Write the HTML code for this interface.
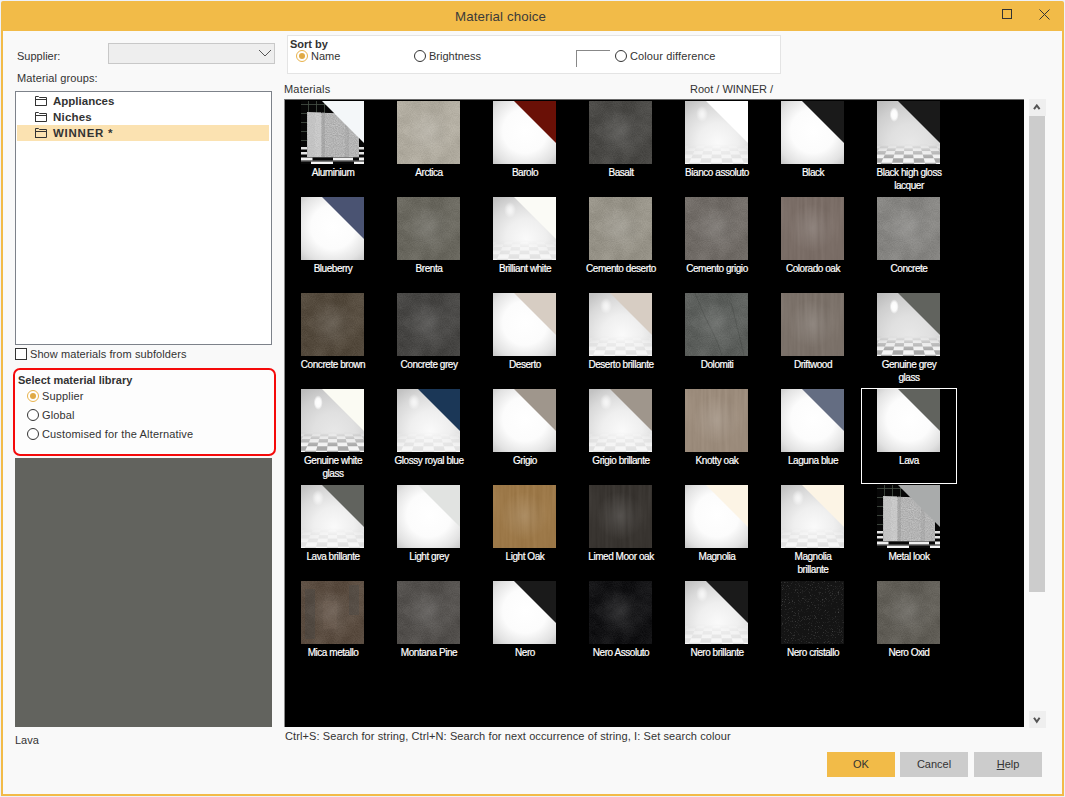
<!DOCTYPE html>
<html><head><meta charset="utf-8">
<style>
*{margin:0;padding:0;box-sizing:border-box}
html,body{width:1065px;height:797px;overflow:hidden;background:#eef1f9;font-family:"Liberation Sans",sans-serif;color:#333}
.win{position:absolute;left:1px;top:1px;width:1063px;height:795px;background:#f2bb48;border-radius:2px 2px 0 0}
.cont{position:absolute;left:2px;top:30px;width:1059px;height:763px;background:#f9f9f9}
.t{position:absolute;white-space:nowrap;line-height:1;font-size:11px}
.b{font-weight:bold}
.title{position:absolute;left:454px;top:9px;font-size:13.3px;line-height:1;color:#3a3a3a;letter-spacing:.1px}
.ctl{position:absolute}
.combo{left:108px;top:43px;width:167px;height:21px;background:#eeeeee;border:1px solid #c8c8c8}
.tree{left:15px;top:91px;width:257px;height:254px;background:#fff;border:1px solid #7d828a}
.hl{position:absolute;left:17px;top:125px;width:252px;height:16px;background:#fbe2b1}
.folder{position:absolute;width:12px;height:11px}
.chk{left:15px;top:348px;width:12px;height:12px;border:1px solid #333;background:#fff}
.redbox{left:13px;top:368px;width:263px;height:88px;border:2px solid #f50a0a;border-radius:7px;background:#fdfdfd}
.radio{position:absolute;width:12px;height:12px;border:1px solid #333;border-radius:50%;background:#fff}
.radio.on{border-color:#e8b24a}
.radio.on::after{content:"";position:absolute;left:2px;top:2px;width:6px;height:6px;border-radius:50%;background:#e0aa45}
.preview{left:15px;top:458px;width:257px;height:269px;background:#62635e}
.sortbox{left:287px;top:35px;width:494px;height:39px;border:1px solid #e4e4e4;background:#fff}
.colbox{left:576px;top:50px;width:34px;height:17px;border-top:1px solid #888;border-left:1px solid #888}
.grid{position:absolute;left:284px;top:99px;width:740px;height:628px;background:#000;border-top:1px solid #6a6a6a;border-left:1px solid #8a8a8a;overflow:hidden}
.cell{position:absolute;width:96px;height:96px}
.cell.sel{border:1px solid #fff}
.th{position:absolute;left:16px;top:1px;display:block}
.sel .th{left:15px;top:0}
.lb{position:absolute;left:0;top:66px;width:96px;text-align:center;color:#fff;-webkit-text-stroke:.2px #fff;font-size:10px;line-height:13px;letter-spacing:-.45px}
.sel .lb{left:-1px;top:65px}
.sb{position:absolute;left:1029px;width:17px;background:#efefef}
.thumb{position:absolute;left:1029px;top:116px;width:16px;height:476px;background:#cccccc}
.btn{position:absolute;top:752px;width:68px;height:25px;background:#cccccc;font-size:11px;line-height:25px;text-align:center;color:#333}
.btn.ok{background:#f2bb48}
</style></head><body>
<svg width="0" height="0" style="position:absolute">
<defs>
  <radialGradient id="glossg" gradientUnits="userSpaceOnUse" cx="32" cy="30" r="49">
    <stop offset="0" stop-color="#ffffff"/>
    <stop offset="0.45" stop-color="#fcfcfc"/>
    <stop offset="0.75" stop-color="#e2e2e2"/>
    <stop offset="1" stop-color="#bdbdbd"/>
  </radialGradient>
  <radialGradient id="chkbg" gradientUnits="userSpaceOnUse" cx="33" cy="42" r="50">
    <stop offset="0" stop-color="#fafafa"/>
    <stop offset="0.4" stop-color="#efefef"/>
    <stop offset="0.75" stop-color="#d9d9d9"/>
    <stop offset="1" stop-color="#c2c2c2"/>
  </radialGradient>
  <radialGradient id="chkbg2" gradientUnits="userSpaceOnUse" cx="33" cy="44" r="52">
    <stop offset="0" stop-color="#e8e8e8"/>
    <stop offset="0.4" stop-color="#e0e0e0"/>
    <stop offset="0.75" stop-color="#cfcfcf"/>
    <stop offset="1" stop-color="#bcbcbc"/>
  </radialGradient>
  <linearGradient id="fog" gradientUnits="userSpaceOnUse" x1="0" y1="44" x2="0" y2="60">
    <stop offset="0" stop-color="#f2f2f2" stop-opacity="1"/>
    <stop offset="1" stop-color="#f2f2f2" stop-opacity="0"/>
  </linearGradient>
  <radialGradient id="spotg">
    <stop offset="0" stop-color="#fff" stop-opacity="1"/>
    <stop offset="0.4" stop-color="#fff" stop-opacity=".75"/>
    <stop offset="1" stop-color="#fff" stop-opacity="0"/>
  </radialGradient>
  <radialGradient id="texhl" gradientUnits="userSpaceOnUse" cx="31" cy="31" r="24">
    <stop offset="0" stop-color="#fff" stop-opacity=".13"/>
    <stop offset="1" stop-color="#fff" stop-opacity="0"/>
  </radialGradient>
  <filter id="fc" x="0" y="0" width="100%" height="100%" color-interpolation-filters="sRGB">
    <feTurbulence type="fractalNoise" baseFrequency="0.06" numOctaves="3" seed="4" result="n"/>
    <feColorMatrix in="n" type="matrix" values="1 0 0 0 0 1 0 0 0 0 1 0 0 0 0 0 0 0 0 1" result="g"/>
    <feComposite in="SourceGraphic" in2="g" operator="arithmetic" k1="0" k2="1" k3="0.10" k4="-0.05" result="a"/>
    <feTurbulence type="fractalNoise" baseFrequency="0.9" numOctaves="1" seed="7" result="n2"/>
    <feColorMatrix in="n2" type="matrix" values="1 0 0 0 0 1 0 0 0 0 1 0 0 0 0 0 0 0 0 1" result="g2"/>
    <feComposite in="a" in2="g2" operator="arithmetic" k1="0" k2="1" k3="0.10" k4="-0.05"/>
  </filter>
  <filter id="fs" x="0" y="0" width="100%" height="100%" color-interpolation-filters="sRGB">
    <feTurbulence type="fractalNoise" baseFrequency="0.3 0.02" numOctaves="2" seed="5" result="n"/>
    <feColorMatrix in="n" type="matrix" values="1 0 0 0 0 1 0 0 0 0 1 0 0 0 0 0 0 0 0 1" result="g"/>
    <feComposite in="SourceGraphic" in2="g" operator="arithmetic" k1="0" k2="1" k3="0.07" k4="-0.035"/>
  </filter>
  <filter id="fg" x="0" y="0" width="100%" height="100%" color-interpolation-filters="sRGB">
    <feTurbulence type="fractalNoise" baseFrequency="1.1" numOctaves="1" seed="11" result="n"/>
    <feColorMatrix in="n" type="matrix" values="1 0 0 0 0 1 0 0 0 0 1 0 0 0 0 0 0 0 0 1" result="g"/>
    <feComposite in="SourceGraphic" in2="g" operator="arithmetic" k1="0" k2="1" k3="0.22" k4="-0.11" result="c"/>
    <feComposite in="c" in2="SourceGraphic" operator="in"/>
  </filter>
  <filter id="fk" x="0" y="0" width="100%" height="100%" color-interpolation-filters="sRGB">
    <feTurbulence type="fractalNoise" baseFrequency="1.3" numOctaves="1" seed="9" result="n"/>
    <feColorMatrix in="n" type="matrix" values="0 0 0 0 0.4 0 0 0 0 0.4 0 0 0 0 0.4 2.5 0 0 0 -1.45" result="g"/>
    <feComposite in="g" in2="SourceGraphic" operator="over"/>
  </filter>
  <path id="chkp" d="M-9.9,66.9 L1.9,66.9 L4.2,61.7 L-6.7,61.7ZM13.8,66.9 L25.6,66.9 L26.0,61.7 L15.1,61.7ZM37.4,66.9 L49.2,66.9 L47.9,61.7 L37.0,61.7ZM61.1,66.9 L72.9,66.9 L69.7,61.7 L58.8,61.7ZM4.2,61.7 L15.1,61.7 L16.3,57.3 L6.2,57.3ZM26.0,61.7 L37.0,61.7 L36.6,57.3 L26.4,57.3ZM47.9,61.7 L58.8,61.7 L56.8,57.3 L46.7,57.3ZM-4.0,57.3 L6.2,57.3 L7.9,53.5 L-1.6,53.5ZM16.3,57.3 L26.4,57.3 L26.8,53.5 L17.3,53.5ZM36.6,57.3 L46.7,57.3 L45.7,53.5 L36.2,53.5ZM56.8,57.3 L67.0,57.3 L64.6,53.5 L55.1,53.5ZM-11.1,53.5 L-1.6,53.5 L0.5,50.1 L-8.4,50.1ZM7.9,53.5 L17.3,53.5 L18.2,50.1 L9.3,50.1ZM26.8,53.5 L36.2,53.5 L35.9,50.1 L27.1,50.1ZM45.7,53.5 L55.1,53.5 L53.7,50.1 L44.8,50.1ZM64.6,53.5 L74.1,53.5 L71.4,50.1 L62.5,50.1ZM0.5,50.1 L9.3,50.1 L10.6,47.2 L2.3,47.2ZM18.2,50.1 L27.1,50.1 L27.3,47.2 L19.0,47.2ZM35.9,50.1 L44.8,50.1 L44.0,47.2 L35.7,47.2ZM53.7,50.1 L62.5,50.1 L60.7,47.2 L52.4,47.2ZM-6.0,47.2 L2.3,47.2 L3.9,44.5 L-4.0,44.5ZM10.6,47.2 L19.0,47.2 L19.7,44.5 L11.8,44.5ZM27.3,47.2 L35.7,47.2 L35.4,44.5 L27.6,44.5ZM44.0,47.2 L52.4,47.2 L51.2,44.5 L43.3,44.5ZM60.7,47.2 L69.0,47.2 L67.0,44.5 L59.1,44.5ZM3.9,44.5 L11.8,44.5 L12.8,42.2 L5.4,42.2ZM19.7,44.5 L27.6,44.5 L27.8,42.2 L20.3,42.2ZM35.4,44.5 L43.3,44.5 L42.7,42.2 L35.2,42.2ZM51.2,44.5 L59.1,44.5 L57.6,42.2 L50.2,42.2Z"/>
  <linearGradient id="fog2" gradientUnits="userSpaceOnUse" x1="0" y1="44" x2="0" y2="58">
    <stop offset="0" stop-color="#e2e2e2" stop-opacity="1"/>
    <stop offset="1" stop-color="#e2e2e2" stop-opacity="0"/>
  </linearGradient>
  <radialGradient id="spotg2">
    <stop offset="0" stop-color="#fff" stop-opacity="1"/>
    <stop offset="0.6" stop-color="#fff" stop-opacity=".9"/>
    <stop offset="1" stop-color="#fff" stop-opacity="0"/>
  </radialGradient>
  <linearGradient id="fmg" gradientUnits="userSpaceOnUse" x1="0" y1="43" x2="0" y2="60">
    <stop offset="0" stop-color="#000"/>
    <stop offset="1" stop-color="#fff"/>
  </linearGradient>
  <mask id="fm" maskUnits="userSpaceOnUse" x="0" y="0" width="63" height="63"><rect x="0" y="42" width="63" height="21" fill="url(#fmg)"/></mask>
  <linearGradient id="fmg2" gradientUnits="userSpaceOnUse" x1="0" y1="43" x2="0" y2="57">
    <stop offset="0" stop-color="#000"/>
    <stop offset="1" stop-color="#fff"/>
  </linearGradient>
  <mask id="fm2" maskUnits="userSpaceOnUse" x="0" y="0" width="63" height="63"><rect x="0" y="42" width="63" height="21" fill="url(#fmg2)"/></mask>
  <g id="spot"><ellipse cx="17" cy="13" rx="6" ry="8" fill="url(#spotg)" opacity=".75"/></g>
  <g id="spot2"><ellipse cx="17.2" cy="13.6" rx="4.6" ry="7.4" fill="url(#spotg2)"/></g>
  <g id="floorf" mask="url(#fm)">
    <rect x="0" y="42" width="63" height="21" fill="#e2e2e2"/>
    <use href="#chkp" fill="#f6f6f6"/>
  </g>
  <g id="floors" mask="url(#fm2)">
    <rect x="0" y="42" width="63" height="21" fill="#a8a8a8"/>
    <use href="#chkp" fill="#f4f4f4"/>
  </g>
  <g id="metal">
    <rect width="63" height="63" fill="#060606"/>
    <path d="M7.5,0v47M15.5,0v47M23.5,0v12M0,3.5h63M0,12.5h8M0,21.5h8M0,30.5h8M0,39.5h8" stroke="#475247" stroke-width=".8"/>
    <rect x="0" y="46" width="63" height="2.5" fill="#e2e2e2"/>
    <rect x="0" y="51" width="63" height="2.5" fill="#e6e6e6"/>
    <rect x="0" y="56.5" width="63" height="3" fill="#f0f0f0"/>
    <path d="M11.5,56.5h20.5v3h-20.5zM52,56.5h6v3h-6z" fill="#080808"/>
    <rect x="0" y="60.5" width="63" height="2.5" fill="#f4f4f4"/>
    <path d="M0,60.5h10v2.5h-10zM32,60.5h21v2.5h-21z" fill="#080808"/>
    <path d="M6,11L58,13V56H6Z" fill="#b4b4b4" filter="url(#fg)"/>
    <rect x="7" y="11" width="7" height="45" fill="#d0d0d0" opacity=".55"/>
    <rect x="14" y="11" width="6" height="45" fill="#e0e0e0" opacity=".45"/>
    <rect x="21" y="11" width="3" height="45" fill="#909090" opacity=".35"/>
    <rect x="44" y="12" width="4" height="44" fill="#909090" opacity=".25"/>
  </g>
</defs>
</svg>

<div class="win">
  <div class="title">Material choice</div>
  <svg style="position:absolute;left:999px;top:6px" width="14" height="14" viewBox="0 0 14 14"><rect x="2.5" y="2.5" width="9" height="9" fill="none" stroke="#333" stroke-width="1"/></svg>
  <svg style="position:absolute;left:1038px;top:8px" width="12" height="12" viewBox="0 0 12 12"><path d="M0.5,0.5L10.5,10.5M10.5,0.5L0.5,10.5" stroke="#333" stroke-width="1"/></svg>
  <div class="cont"></div>
</div>

<!-- left panel -->
<div class="t" style="left:17px;top:51px">Supplier:</div>
<div class="ctl combo"><svg style="position:absolute;left:149px;top:5px" width="14" height="8" viewBox="0 0 14 8"><path d="M1,1L7,7L13,1" fill="none" stroke="#555" stroke-width="1"/></svg></div>
<div class="t" style="left:17px;top:73px;letter-spacing:.12px">Material groups:</div>
<div class="ctl tree"></div>
<div class="hl"></div>
<svg class="folder" style="left:35px;top:96px" viewBox="0 0 12 11"><path d="M0.5,10V0.5H3.5L4.5,1.5H11.5V9.5H0.5M0.5,3.5H11.5" fill="none" stroke="#333" stroke-width="1"/></svg>
<svg class="folder" style="left:35px;top:112px" viewBox="0 0 12 11"><path d="M0.5,10V0.5H3.5L4.5,1.5H11.5V9.5H0.5M0.5,3.5H11.5" fill="none" stroke="#333" stroke-width="1"/></svg>
<svg class="folder" style="left:35px;top:128px" viewBox="0 0 12 11"><path d="M0.5,10V0.5H3.5L4.5,1.5H11.5V9.5H0.5M0.5,3.5H11.5" fill="none" stroke="#333" stroke-width="1"/></svg>
<div class="t b" style="left:53px;top:96px;font-size:11.5px">Appliances</div>
<div class="t b" style="left:53px;top:112px;font-size:11.5px;letter-spacing:.2px">Niches</div>
<div class="t b" style="left:53px;top:128px;font-size:11.5px;letter-spacing:.75px">WINNER *</div>

<div class="ctl chk"></div>
<div class="t" style="left:30px;top:349px;letter-spacing:.08px">Show materials from subfolders</div>

<div class="ctl redbox"></div>
<div class="t b" style="left:18px;top:375px">Select material library</div>
<div class="radio on" style="left:27px;top:390px"></div>
<div class="t" style="left:42px;top:391px;letter-spacing:.15px">Supplier</div>
<div class="radio" style="left:27px;top:409px"></div>
<div class="t" style="left:42px;top:410px;letter-spacing:.15px">Global</div>
<div class="radio" style="left:27px;top:428px"></div>
<div class="t" style="left:42px;top:429px;letter-spacing:.15px">Customised for the Alternative</div>

<div class="ctl preview"></div>
<div class="t" style="left:15px;top:735px">Lava</div>

<!-- sort -->
<div class="ctl sortbox"></div>
<div class="t b" style="left:290px;top:39px">Sort by</div>
<div class="radio on" style="left:296px;top:50px"></div>
<div class="t" style="left:311px;top:51px">Name</div>
<div class="radio" style="left:414px;top:50px"></div>
<div class="t" style="left:429px;top:51px">Brightness</div>
<div class="ctl colbox"></div>
<div class="radio" style="left:615px;top:50px"></div>
<div class="t" style="left:630px;top:51px;letter-spacing:.12px">Colour difference</div>

<div class="t" style="left:284px;top:84px;letter-spacing:.2px">Materials</div>
<div class="t" style="left:690px;top:84px">Root / WINNER /</div>

<div class="grid">
<div class="cell" style="left:0px;top:0px"><svg class="th" width="63" height="63" viewBox="0 0 63 63"><use href="#metal"/><polygon points="21,0 63,0 63,42" fill="#f4f7f9"/></svg><div class="lb">Aluminium</div></div>
<div class="cell" style="left:96px;top:0px"><svg class="th" width="63" height="63" viewBox="0 0 63 63"><rect width="63" height="63" fill="#b0ab9f" filter="url(#fc)"/><rect width="63" height="63" fill="url(#texhl)"/></svg><div class="lb">Arctica</div></div>
<div class="cell" style="left:192px;top:0px"><svg class="th" width="63" height="63" viewBox="0 0 63 63"><rect width="63" height="63" fill="url(#glossg)"/><polygon points="21,0 63,0 63,42" fill="#6a1006"/></svg><div class="lb">Barolo</div></div>
<div class="cell" style="left:288px;top:0px"><svg class="th" width="63" height="63" viewBox="0 0 63 63"><rect width="63" height="63" fill="#4a4946" filter="url(#fc)"/><rect width="63" height="63" fill="url(#texhl)"/></svg><div class="lb">Basalt</div></div>
<div class="cell" style="left:384px;top:0px"><svg class="th" width="63" height="63" viewBox="0 0 63 63"><rect width="63" height="63" fill="url(#chkbg)"/><use href="#floorf"/><use href="#spot"/><polygon points="21,0 63,0 63,42" fill="#ffffff"/></svg><div class="lb">Bianco assoluto</div></div>
<div class="cell" style="left:480px;top:0px"><svg class="th" width="63" height="63" viewBox="0 0 63 63"><rect width="63" height="63" fill="url(#glossg)"/><polygon points="21,0 63,0 63,42" fill="#1a1a1a"/></svg><div class="lb">Black</div></div>
<div class="cell" style="left:576px;top:0px"><svg class="th" width="63" height="63" viewBox="0 0 63 63"><rect width="63" height="63" fill="url(#chkbg2)"/><use href="#floors"/><use href="#spot2"/><polygon points="21,0 63,0 63,42" fill="#1a1a1a"/></svg><div class="lb">Black high gloss<br>lacquer</div></div>
<div class="cell" style="left:0px;top:96px"><svg class="th" width="63" height="63" viewBox="0 0 63 63"><rect width="63" height="63" fill="url(#glossg)"/><polygon points="21,0 63,0 63,42" fill="#4a5372"/></svg><div class="lb">Blueberry</div></div>
<div class="cell" style="left:96px;top:96px"><svg class="th" width="63" height="63" viewBox="0 0 63 63"><rect width="63" height="63" fill="#6a685f" filter="url(#fc)"/><rect width="63" height="63" fill="url(#texhl)"/></svg><div class="lb">Brenta</div></div>
<div class="cell" style="left:192px;top:96px"><svg class="th" width="63" height="63" viewBox="0 0 63 63"><rect width="63" height="63" fill="url(#chkbg)"/><use href="#floorf"/><use href="#spot"/><polygon points="21,0 63,0 63,42" fill="#fbfbf6"/></svg><div class="lb">Brilliant white</div></div>
<div class="cell" style="left:288px;top:96px"><svg class="th" width="63" height="63" viewBox="0 0 63 63"><rect width="63" height="63" fill="#979388" filter="url(#fc)"/><rect width="63" height="63" fill="url(#texhl)"/></svg><div class="lb">Cemento deserto</div></div>
<div class="cell" style="left:384px;top:96px"><svg class="th" width="63" height="63" viewBox="0 0 63 63"><rect width="63" height="63" fill="#716c67" filter="url(#fc)"/><rect width="63" height="63" fill="url(#texhl)"/></svg><div class="lb">Cemento grigio</div></div>
<div class="cell" style="left:480px;top:96px"><svg class="th" width="63" height="63" viewBox="0 0 63 63"><rect width="63" height="63" fill="#7a6d66" filter="url(#fs)"/><rect width="63" height="63" fill="url(#texhl)"/></svg><div class="lb">Colorado oak</div></div>
<div class="cell" style="left:576px;top:96px"><svg class="th" width="63" height="63" viewBox="0 0 63 63"><rect width="63" height="63" fill="#868582" filter="url(#fc)"/><rect width="63" height="63" fill="url(#texhl)"/></svg><div class="lb">Concrete</div></div>
<div class="cell" style="left:0px;top:192px"><svg class="th" width="63" height="63" viewBox="0 0 63 63"><rect width="63" height="63" fill="#544a3d" filter="url(#fc)"/><rect width="63" height="63" fill="url(#texhl)"/></svg><div class="lb">Concrete brown</div></div>
<div class="cell" style="left:96px;top:192px"><svg class="th" width="63" height="63" viewBox="0 0 63 63"><rect width="63" height="63" fill="#474644" filter="url(#fc)"/><rect width="63" height="63" fill="url(#texhl)"/></svg><div class="lb">Concrete grey</div></div>
<div class="cell" style="left:192px;top:192px"><svg class="th" width="63" height="63" viewBox="0 0 63 63"><rect width="63" height="63" fill="url(#glossg)"/><polygon points="21,0 63,0 63,42" fill="#d7cdc3"/></svg><div class="lb">Deserto</div></div>
<div class="cell" style="left:288px;top:192px"><svg class="th" width="63" height="63" viewBox="0 0 63 63"><rect width="63" height="63" fill="url(#chkbg)"/><use href="#floorf"/><use href="#spot"/><polygon points="21,0 63,0 63,42" fill="#d7cdc3"/></svg><div class="lb">Deserto brillante</div></div>
<div class="cell" style="left:384px;top:192px"><svg class="th" width="63" height="63" viewBox="0 0 63 63"><rect width="63" height="63" fill="#5c5f5c" filter="url(#fc)"/><rect width="63" height="63" fill="url(#texhl)"/><path d="M10,0C14,10 18,20 24,32S34,52 37,63M46,10C49,20 52,34 55,46S58,58 59,63" stroke="#383b38" stroke-width="1" fill="none" opacity=".3"/></svg><div class="lb">Dolomiti</div></div>
<div class="cell" style="left:480px;top:192px"><svg class="th" width="63" height="63" viewBox="0 0 63 63"><rect width="63" height="63" fill="#7b7169" filter="url(#fs)"/><rect width="63" height="63" fill="url(#texhl)"/></svg><div class="lb">Driftwood</div></div>
<div class="cell" style="left:576px;top:192px"><svg class="th" width="63" height="63" viewBox="0 0 63 63"><rect width="63" height="63" fill="url(#chkbg2)"/><use href="#floors"/><use href="#spot2"/><polygon points="21,0 63,0 63,42" fill="#61635e"/></svg><div class="lb">Genuine grey<br>glass</div></div>
<div class="cell" style="left:0px;top:288px"><svg class="th" width="63" height="63" viewBox="0 0 63 63"><rect width="63" height="63" fill="url(#chkbg2)"/><use href="#floors"/><use href="#spot2"/><polygon points="21,0 63,0 63,42" fill="#fbfbf3"/></svg><div class="lb">Genuine white<br>glass</div></div>
<div class="cell" style="left:96px;top:288px"><svg class="th" width="63" height="63" viewBox="0 0 63 63"><rect width="63" height="63" fill="url(#chkbg)"/><use href="#floorf"/><use href="#spot"/><polygon points="21,0 63,0 63,42" fill="#1b3757"/></svg><div class="lb">Glossy royal blue</div></div>
<div class="cell" style="left:192px;top:288px"><svg class="th" width="63" height="63" viewBox="0 0 63 63"><rect width="63" height="63" fill="url(#glossg)"/><polygon points="21,0 63,0 63,42" fill="#9f968c"/></svg><div class="lb">Grigio</div></div>
<div class="cell" style="left:288px;top:288px"><svg class="th" width="63" height="63" viewBox="0 0 63 63"><rect width="63" height="63" fill="url(#chkbg)"/><use href="#floorf"/><use href="#spot"/><polygon points="21,0 63,0 63,42" fill="#9f968c"/></svg><div class="lb">Grigio brillante</div></div>
<div class="cell" style="left:384px;top:288px"><svg class="th" width="63" height="63" viewBox="0 0 63 63"><rect width="63" height="63" fill="#9b8b7b" filter="url(#fs)"/><rect width="63" height="63" fill="url(#texhl)"/></svg><div class="lb">Knotty oak</div></div>
<div class="cell" style="left:480px;top:288px"><svg class="th" width="63" height="63" viewBox="0 0 63 63"><rect width="63" height="63" fill="url(#glossg)"/><polygon points="21,0 63,0 63,42" fill="#646d82"/></svg><div class="lb">Laguna blue</div></div>
<div class="cell sel" style="left:576px;top:288px"><svg class="th" width="63" height="63" viewBox="0 0 63 63"><rect width="63" height="63" fill="url(#glossg)"/><polygon points="21,0 63,0 63,42" fill="#61635e"/></svg><div class="lb">Lava</div></div>
<div class="cell" style="left:0px;top:384px"><svg class="th" width="63" height="63" viewBox="0 0 63 63"><rect width="63" height="63" fill="url(#chkbg)"/><use href="#floorf"/><use href="#spot"/><polygon points="21,0 63,0 63,42" fill="#61635e"/></svg><div class="lb">Lava brillante</div></div>
<div class="cell" style="left:96px;top:384px"><svg class="th" width="63" height="63" viewBox="0 0 63 63"><rect width="63" height="63" fill="url(#glossg)"/><polygon points="21,0 63,0 63,42" fill="#e1e3e1"/></svg><div class="lb">Light grey</div></div>
<div class="cell" style="left:192px;top:384px"><svg class="th" width="63" height="63" viewBox="0 0 63 63"><rect width="63" height="63" fill="#9c7848" filter="url(#fs)"/><rect width="63" height="63" fill="url(#texhl)"/></svg><div class="lb">Light Oak</div></div>
<div class="cell" style="left:288px;top:384px"><svg class="th" width="63" height="63" viewBox="0 0 63 63"><rect width="63" height="63" fill="#383430" filter="url(#fs)"/><rect width="63" height="63" fill="url(#texhl)"/></svg><div class="lb">Limed Moor oak</div></div>
<div class="cell" style="left:384px;top:384px"><svg class="th" width="63" height="63" viewBox="0 0 63 63"><rect width="63" height="63" fill="url(#glossg)"/><polygon points="21,0 63,0 63,42" fill="#fcf4e5"/></svg><div class="lb">Magnolia</div></div>
<div class="cell" style="left:480px;top:384px"><svg class="th" width="63" height="63" viewBox="0 0 63 63"><rect width="63" height="63" fill="url(#chkbg)"/><use href="#floorf"/><use href="#spot"/><polygon points="21,0 63,0 63,42" fill="#fcf4e5"/></svg><div class="lb">Magnolia<br>brillante</div></div>
<div class="cell" style="left:576px;top:384px"><svg class="th" width="63" height="63" viewBox="0 0 63 63"><use href="#metal"/><polygon points="21,0 63,0 63,42" fill="#a9abab"/></svg><div class="lb">Metal look</div></div>
<div class="cell" style="left:0px;top:480px"><svg class="th" width="63" height="63" viewBox="0 0 63 63"><rect width="63" height="63" fill="#5a4c40" filter="url(#fc)"/><rect width="63" height="63" fill="url(#texhl)"/><rect x="4" y="8" width="10" height="50" fill="#3d4348" opacity=".25"/><rect x="48" y="4" width="10" height="30" fill="#3d4348" opacity=".25"/><rect x="22" y="20" width="14" height="28" fill="#8a7a6a" opacity=".15"/></svg><div class="lb">Mica metallo</div></div>
<div class="cell" style="left:96px;top:480px"><svg class="th" width="63" height="63" viewBox="0 0 63 63"><rect width="63" height="63" fill="#53504d" filter="url(#fc)"/><rect width="63" height="63" fill="url(#texhl)"/></svg><div class="lb">Montana Pine</div></div>
<div class="cell" style="left:192px;top:480px"><svg class="th" width="63" height="63" viewBox="0 0 63 63"><rect width="63" height="63" fill="url(#glossg)"/><polygon points="21,0 63,0 63,42" fill="#1a1a1a"/></svg><div class="lb">Nero</div></div>
<div class="cell" style="left:288px;top:480px"><svg class="th" width="63" height="63" viewBox="0 0 63 63"><rect width="63" height="63" fill="#131315" filter="url(#fc)"/><rect width="63" height="63" fill="url(#texhl)"/></svg><div class="lb">Nero Assoluto</div></div>
<div class="cell" style="left:384px;top:480px"><svg class="th" width="63" height="63" viewBox="0 0 63 63"><rect width="63" height="63" fill="url(#chkbg)"/><use href="#floorf"/><use href="#spot"/><polygon points="21,0 63,0 63,42" fill="#1a1a1a"/></svg><div class="lb">Nero brillante</div></div>
<div class="cell" style="left:480px;top:480px"><svg class="th" width="63" height="63" viewBox="0 0 63 63"><rect width="63" height="63" fill="#141414" filter="url(#fk)"/></svg><div class="lb">Nero cristallo</div></div>
<div class="cell" style="left:576px;top:480px"><svg class="th" width="63" height="63" viewBox="0 0 63 63"><rect width="63" height="63" fill="#615e57" filter="url(#fc)"/><rect width="63" height="63" fill="url(#texhl)"/></svg><div class="lb">Nero Oxid</div></div>
</div>

<!-- scrollbar -->
<div class="sb" style="top:99px;height:17px"><svg style="position:absolute;left:4px;top:5px" width="9" height="7" viewBox="0 0 9 7"><path d="M1,5.2L3.8,1.5L6.6,5.2" fill="none" stroke="#555" stroke-width="2"/></svg></div>
<div class="thumb"></div>
<div class="sb" style="top:711px;height:17px"><svg style="position:absolute;left:4px;top:6px" width="9" height="7" viewBox="0 0 9 7"><path d="M1,0.8L3.8,4.8L6.6,0.8" fill="none" stroke="#555" stroke-width="2"/></svg></div>

<div class="t" style="left:285px;top:731px;letter-spacing:.1px">Ctrl+S: Search for string, Ctrl+N: Search for next occurrence of string, I: Set search colour</div>

<div class="btn ok" style="left:827px">OK</div>
<div class="btn" style="left:900px">Cancel</div>
<div class="btn" style="left:974px"><u>H</u>elp</div>
</body></html>
